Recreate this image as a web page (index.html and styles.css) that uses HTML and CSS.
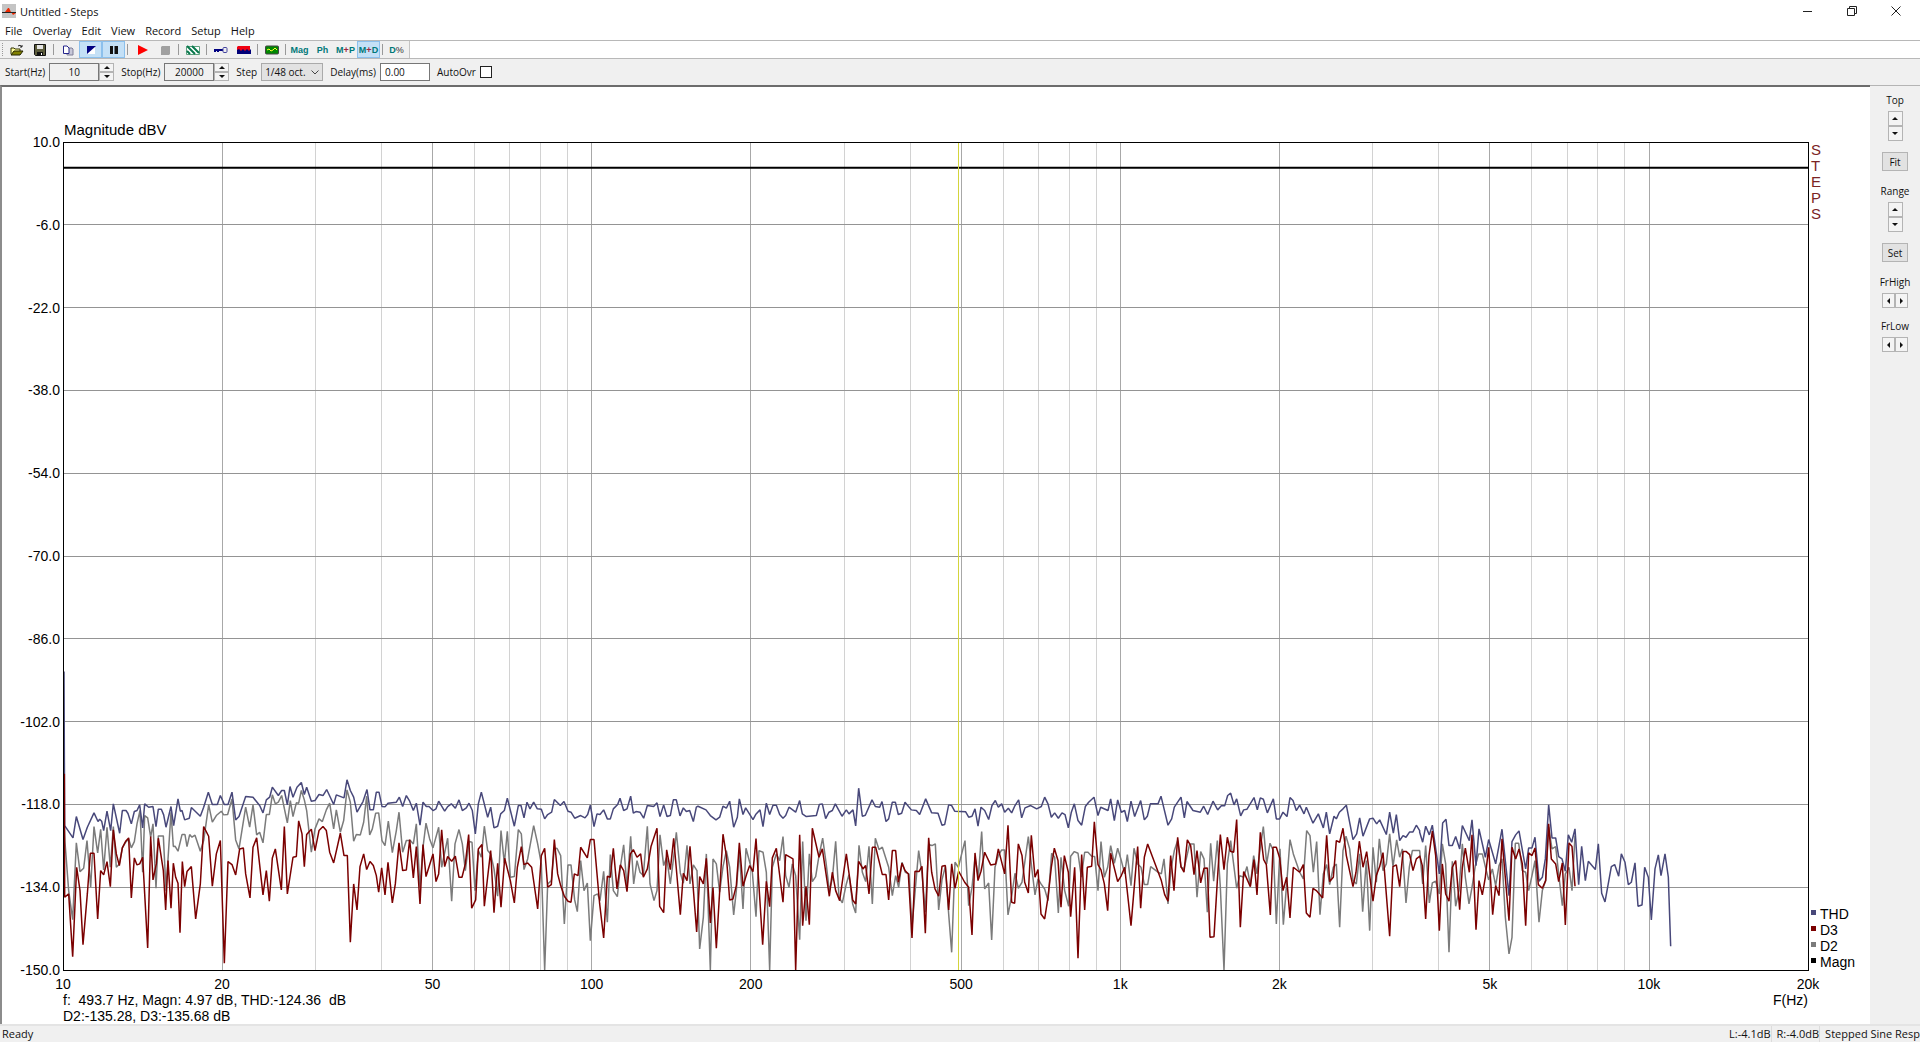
FILE: index.html
```html
<!DOCTYPE html>
<html lang="en">

<head>
    <meta charset="UTF-8">
    <meta name="viewport" content="width=device-width, initial-scale=1.0">
    <title>Untitled - Steps</title>
    <link rel="stylesheet" href="styles.css">
</head>

<body>
    <header class="titlebar">
        <svg class="app-icon" viewBox="0 0 14 14"><rect width="14" height="14" fill="#c4c4c4"/><path d="M0 9L3 8L6 4H7L9 8L11 11L14 9V8H0Z" fill="#f02800"/><path d="M0 8.500H14" stroke="#222"/></svg>
        <h1>Untitled - Steps</h1>
        <div class="window-buttons">
            <button type="button" aria-label="Minimize"><svg viewBox="0 0 10 10"><path d="M0 5.5H9"/></svg></button>
            <button type="button" aria-label="Restore"><svg viewBox="0 0 10 10"><path d="M.5 2.5H7.500V9.500H.5ZM2.500 2V.5H9.500V7.500H8"/></svg></button>
            <button type="button" aria-label="Close"><svg viewBox="0 0 10 10"><path d="M.5 .5L9.500 9.500M9.500 .5L.5 9.500"/></svg></button>
        </div>
    </header>

    <nav class="menu">
        <a href="#">File</a>
        <a href="#">Overlay</a>
        <a href="#">Edit</a>
        <a href="#">View</a>
        <a href="#">Record</a>
        <a href="#">Setup</a>
        <a href="#">Help</a>
    </nav>

    <div class="toolbar">
        <div class="tools">
            <span class="grip"></span>
            <button type="button" aria-label="Open"><svg viewBox="0 0 14 12"><path d="M1 10V4H4L5 5H10V7" fill="#ffff9c" stroke="#333300"/><path d="M1 11L4 7H13L10 11Z" fill="#808000" stroke="#222200"/><path d="M8 2Q10 0 12 3M12 1V3H10" fill="none" stroke="#222"/></svg></button>
            <button type="button" aria-label="Save"><svg viewBox="0 0 14 12"><path d="M2 .5H12.500V11.500H2.500L1.500 10.500V.5Z" fill="#5c5c3c" stroke="#111"/><path d="M4 1H10V5H4Z" fill="#e4e4e4"/><path d="M4 8H10V11H4Z" fill="#111"/><path d="M8 9H9V11H8Z" fill="#fff"/></svg></button>
            <span class="sep"></span>
            <button type="button" aria-label="Copy"><svg viewBox="0 0 14 12"><path d="M6 4H11L12 5V11H6Z" fill="#c8c8d8" stroke="#808098"/><path d="M2.500 2H6L8 4V9.500H2.500Z" fill="#fff" stroke="#26268c"/></svg></button>
            <button type="button" class="on" aria-label="Time record"><svg viewBox="0 0 14 12"><path d="M3 2H11V10H3Z" fill="#fff"/><path d="M3 2H12L3 10Z" fill="#000080"/></svg></button>
            <button type="button" class="on" aria-label="Pause"><svg viewBox="0 0 14 12"><path d="M3 2H6V10H3ZM7.500 2H11V10H7.500Z" fill="#111"/></svg></button>
            <span class="sep"></span>
            <button type="button" aria-label="Record"><svg viewBox="0 0 14 12"><path d="M3 1L13 6L3 11Z" fill="#f00"/></svg></button>
            <button type="button" aria-label="Stop" disabled><svg viewBox="0 0 14 12"><path d="M4 2H12V10L11 11H3V3Z" fill="#a0a0a0"/></svg></button>
            <span class="sep"></span>
            <button type="button" aria-label="Overlay"><svg viewBox="0 0 14 12"><path d="M.5 2.500H13.500V10.500H.5Z" fill="#fff" stroke="#60a080"/><path d="M1 2L9 10M6 2L13 9M1 7L4 10" stroke="#08784c" stroke-width="2"/></svg></button>
            <span class="sep"></span>
            <button type="button" aria-label="Calibrate"><svg viewBox="0 0 14 12"><path d="M0 6H9M1 6V8M4 6V8" stroke="#000080" stroke-width="2"/><rect x="9" y="3.500" width="4" height="5" rx="1" fill="#eee" stroke="#4444a0"/></svg></button>
            <button type="button" aria-label="Spectrum"><svg viewBox="0 0 14 12"><path d="M1 2H13V7H0V3Z" fill="#f00010"/><path d="M0 6L2 5L4 7L6 5L8 7L10 5L12 7L14 5V10H0Z" fill="#000078"/></svg></button>
            <span class="sep"></span>
            <button type="button" aria-label="Generator"><svg viewBox="0 0 14 12"><rect x=".5" y="2" width="13" height="8" rx="1" fill="#008800" stroke="#444"/><path d="M2 6L4 5L6 7L8 6L10 4L12 6" fill="none" stroke="#ffff30"/></svg></button>
            <span class="sep"></span>
            <button type="button">Mag</button>
            <button type="button">Ph</button>
            <button type="button">M<i>+</i>P</button>
            <button type="button" class="on">M<i>+</i>D</button>
            <span class="sep"></span>
            <button type="button">D<b>%</b></button>
        </div>
    </div>

    <form class="params">
        <label for="start">Start(Hz)</label>
        <div class="number">
            <input type="text" id="start" value="10">
            <div class="spin"><button type="button" aria-label="Start up"><i class="up"></i></button><button type="button" aria-label="Start down"><i class="down"></i></button></div>
        </div>
        <label for="stop">Stop(Hz)</label>
        <div class="number">
            <input type="text" id="stop" value="20000">
            <div class="spin"><button type="button" aria-label="Stop up"><i class="up"></i></button><button type="button" aria-label="Stop down"><i class="down"></i></button></div>
        </div>
        <label for="step">Step</label>
        <div class="select">
            <select id="step"><option>1/48 oct.</option></select>
            <svg viewBox="0 0 8 5"><path d="M.5 .5L4 4L7.500 .5"/></svg>
        </div>
        <label for="delay">Delay(ms)</label>
        <input type="text" id="delay" class="delay" value="0.00">
        <label for="auto">AutoOvr</label>
        <input type="checkbox" id="auto">
    </form>

    <main>
        <section class="chart">
            <h2>Magnitude dBV</h2>
            <div class="y-axis">
                <span>10.0</span><span>-6.0</span><span>-22.0</span><span>-38.0</span><span>-54.0</span><span>-70.0</span><span>-86.0</span><span>-102.0</span><span>-118.0</span><span>-134.0</span><span>-150.0</span>
            </div>
            <svg class="plot" id="plot" viewBox="0 0 5235 2482" preserveAspectRatio="none"></svg>
            <div class="plot-side">
                <div class="brand"><span>S</span><span>T</span><span>E</span><span>P</span><span>S</span></div>
                <ul class="legend">
                    <li class="thd">THD</li>
                    <li class="d3">D3</li>
                    <li class="d2">D2</li>
                    <li class="magn">Magn</li>
                </ul>
            </div>
            <div class="bottom">
                <div class="x-axis">
                    <span>10</span><span>20</span><span>50</span><span>100</span><span>200</span><span>500</span><span>1k</span><span>2k</span><span>5k</span><span>10k</span><span>20k</span>
                </div>
                <div class="readout">
                    <p>f:  493.7 Hz, Magn: 4.97 dB, THD:-124.36  dB
D2:-135.28, D3:-135.68 dB</p>
                    <p>F(Hz)</p>
                </div>
            </div>
        </section>

        <aside class="side">
            <div class="group">
                <span>Top</span>
                <div class="spin tall"><button type="button" aria-label="Top up"><i class="up"></i></button><button type="button" aria-label="Top down"><i class="down"></i></button></div>
            </div>
            <button type="button" class="push">Fit</button>
            <div class="group">
                <span>Range</span>
                <div class="spin tall"><button type="button" aria-label="Range up"><i class="up"></i></button><button type="button" aria-label="Range down"><i class="down"></i></button></div>
            </div>
            <button type="button" class="push">Set</button>
            <div class="group">
                <span>FrHigh</span>
                <div class="spin wide"><button type="button" aria-label="High left"><i class="left"></i></button><button type="button" aria-label="High right"><i class="right"></i></button></div>
            </div>
            <div class="group">
                <span>FrLow</span>
                <div class="spin wide"><button type="button" aria-label="Low left"><i class="left"></i></button><button type="button" aria-label="Low right"><i class="right"></i></button></div>
            </div>
        </aside>
    </main>

    <footer class="status">
        <span>Ready</span>
        <span>L:-4.1dB</span>
        <span>R:-4.0dB</span>
        <span>Stepped Sine Resp</span>
    </footer>

    <script src="script.js"></script>
</body>

</html>
```

FILE: styles.css
```css
* {
    box-sizing: border-box;
}

body {
    margin: 0;
    height: 100vh;
    display: flex;
    flex-direction: column;
    overflow: hidden;
    background-color: #fff;
    color: #111;
    font-family: "Open Sans", sans-serif;
    font-size: 11px;
}

button,
input,
select {
    font: inherit;
    color: inherit;
    margin: 0;
    padding: 0;
    border-radius: 0;
}

.titlebar {
    display: flex;
    align-items: center;
    height: 22px;
    padding: 0 2px;
    flex-shrink: 0;
}

.titlebar h1 {
    margin: 0 auto 0 4px;
    font-size: 11px;
    font-weight: normal;
}

.app-icon {
    width: 14px;
    height: 14px;
}

.window-buttons {
    display: flex;
}

.window-buttons button {
    width: 44px;
    height: 20px;
    border: none;
    background: none;
}

.window-buttons svg {
    width: 10px;
    height: 10px;
    fill: none;
    stroke: #222;
}

.menu {
    display: flex;
    gap: 10px;
    height: 18px;
    padding-left: 5px;
    line-height: 18px;
    flex-shrink: 0;
}

.menu a {
    color: inherit;
    text-decoration: none;
}

.toolbar {
    display: flex;
    height: 19px;
    border-top: 1px solid #b8b8b8;
    border-bottom: 1px solid #b8b8b8;
    flex-shrink: 0;
}

.tools {
    display: flex;
    padding-right: 1px;
    background-color: #f0f0f0;
    border-right: 1px solid #c4c4c4;
}

.grip {
    width: 2px;
    margin: 2px 1px 2px 2px;
    border-left: 1px dotted #999;
}

.sep {
    width: 1px;
    margin: 3px 2px;
    background-color: #999;
}

.tools button {
    display: flex;
    align-items: center;
    justify-content: center;
    width: 23px;
    border: none;
    background: none;
    color: #007878;
    font-family: "Liberation Sans", sans-serif;
    font-size: 9px;
    font-weight: bold;
}

.tools button.on {
    background-color: #c4e0f6;
    outline: 1px solid #8cc0ec;
    outline-offset: -1px;
}

.tools i {
    color: #a02840;
    font-style: normal;
}

.tools b {
    color: #333;
    font-weight: normal;
}

.tools svg {
    width: 14px;
    height: 12px;
}

.params {
    display: flex;
    align-items: center;
    height: 26px;
    padding-left: 5px;
    background-color: #f0f0f0;
    font-size: 10px;
    flex-shrink: 0;
}

.params label {
    margin-right: 4px;
}

.number {
    display: flex;
    margin-right: 7px;
}

.number input,
.delay {
    width: 50px;
    height: 18px;
    border: 1px solid #777;
    background-color: #f0f0f0;
    text-align: center;
}

.params .delay {
    padding-left: 4px;
    margin-right: 7px;
    background-color: #fff;
    text-align: left;
}

.select {
    display: grid;
    align-items: center;
    margin-right: 7px;
}

.select select {
    grid-area: 1 / 1;
    width: 62px;
    height: 18px;
    padding-left: 3px;
    border: 1px solid #aaa;
    background-color: #e2e2e2;
    appearance: none;
}

.select svg {
    grid-area: 1 / 1;
    justify-self: end;
    width: 8px;
    height: 5px;
    margin-right: 4px;
    fill: none;
    stroke: #444;
    pointer-events: none;
}

.params input[type="checkbox"] {
    width: 12px;
    height: 12px;
    border: 1px solid #222;
    background-color: #fff;
    appearance: none;
}

.spin {
    display: flex;
    flex-direction: column;
    width: 15px;
    height: 18px;
}

.spin button {
    display: flex;
    flex: 1;
    align-items: center;
    justify-content: center;
    border: 1px solid #b4b4b4;
    background-color: #f4f4f4;
}

.spin.tall {
    height: 30px;
}

.spin.wide {
    flex-direction: row;
    width: 26px;
    height: 15px;
}

.spin i {
    border: 3px solid transparent;
}

.spin .up {
    border-top: none;
    border-bottom-color: #111;
}

.spin .down {
    border-bottom: none;
    border-top-color: #111;
}

.spin .left {
    border-left: none;
    border-right-color: #111;
}

.spin .right {
    border-right: none;
    border-left-color: #111;
}

main {
    display: flex;
    flex: 1;
    min-height: 0;
}

.chart {
    display: grid;
    flex: 1;
    min-width: 0;
    grid-template-columns: 61px 1fr 62px;
    grid-template-rows: 55px 1fr 54px;
    border-top: 2px solid #6c6c6c;
    border-left: 2px solid #8c8c8c;
    background-color: #fff;
    color: #000;
    font-family: "Liberation Sans", Arial, sans-serif;
    font-size: 14px;
    line-height: 16px;
}

.chart h2 {
    grid-column: 2 / 4;
    align-self: end;
    margin: 0 0 4px 1px;
    font-size: 15px;
    font-weight: normal;
}

.y-axis {
    grid-column: 1;
    display: flex;
    flex-direction: column;
    justify-content: space-between;
    padding-right: 3px;
}

.y-axis span {
    display: flex;
    align-items: center;
    justify-content: flex-end;
    height: 0;
}

.plot {
    width: 100%;
    height: 100%;
    min-height: 0;
    overflow: visible;
}

.plot path {
    fill: none;
    stroke-width: 1px;
    vector-effect: non-scaling-stroke;
}

.plot .grid {
    stroke: #d2d2d2;
    shape-rendering: crispEdges;
}

.plot .grid.main {
    stroke: #a8a8a8;
}

.plot .grid.level {
    stroke: #949494;
}

.plot .frame {
    stroke: #000;
    shape-rendering: crispEdges;
}

.plot .cursor {
    stroke: #d4d43c;
    shape-rendering: crispEdges;
}

.plot .trace {
    stroke-width: 1.5px;
    stroke-linejoin: bevel;
}

.plot .magn {
    stroke: #000;
    stroke-width: 2px;
}

.plot .thd {
    stroke: #48487a;
}

.plot .d3 {
    stroke: #7b0000;
}

.plot .d2 {
    stroke: #7b7b7b;
}

.plot-side {
    display: flex;
    flex-direction: column;
    justify-content: space-between;
    padding-left: 3px;
}

.brand {
    display: flex;
    flex-direction: column;
    color: #7b2424;
    font-size: 15px;
}

.legend {
    margin: 0;
    padding: 0;
    list-style: none;
}

.legend li {
    display: flex;
    align-items: center;
    gap: 4px;
}

.legend li::before {
    content: "";
    width: 5px;
    height: 5px;
    margin-bottom: 3px;
}

.legend .thd::before {
    background-color: #48487a;
}

.legend .d3::before {
    background-color: #7b0000;
}

.legend .d2::before {
    background-color: #7b7b7b;
}

.legend .magn::before {
    background-color: #000;
}

.bottom {
    grid-column: 2;
    padding-top: 6px;
}

.x-axis {
    display: grid;
    grid-template-columns: 301fr 398fr 301fr 301fr 398fr 301fr 301fr 398fr 301fr 301fr 0;
}

.x-axis span {
    display: flex;
    justify-content: center;
    width: 0;
}

.readout {
    display: flex;
    justify-content: space-between;
}

.readout p {
    margin: 0;
    white-space: pre;
}

.side {
    display: flex;
    flex-direction: column;
    align-items: center;
    gap: 11px;
    width: 50px;
    padding-top: 7px;
    border-top: 1px solid #b4b4b4;
    background-color: #f0f0f0;
    font-size: 10px;
}

.group {
    display: flex;
    flex-direction: column;
    align-items: center;
    gap: 4px;
    line-height: 14px;
}

.push {
    width: 26px;
    height: 19px;
    margin-bottom: 2px;
    border: 1px solid #b4b4b4;
    background-color: #e2e2e2;
}

.status {
    display: flex;
    height: 18px;
    padding-left: 2px;
    border-top: 2px solid #e4e4e4;
    background-color: #f0f0f0;
    line-height: 16px;
    white-space: nowrap;
    flex-shrink: 0;
}

.status span {
    margin-right: 5px;
    border-right: 1px solid #dcdcdc;
}

.status span:first-child {
    margin-right: auto;
    border: none;
}

.status span:last-child {
    margin-right: 0;
    border: none;
}
```

FILE: script.js
```js
// One sweep per trace, split in four runs: x offset of the run, then its x,y points
const TOP = 1794;
const OFFSETS = [-190, 1220, 2630, 4010];

const traces = {
    d2: [
        "194,258 196,305 207,450 219,537 230,307 241,393 252,383 262,300 273,440 283,258 294,337 303,266 312,388 322,260 332,380 341,258 350,380 359,370 368,322 378,305 387,295 395,322 404,303 412,250 421,210 429,395 435,225 444,232 453,290 460,250 469,443 476,286 491,286 499,450 514,215 521,318 526,317 535,332 547,282 556,282 562,318 570,282 577,290 586,284 602,332 612,300 627,193 638,245 650,225 665,212 672,223 684,222 697,175 708,298 718,325 738,200 750,260 760,193 771,283 780,275 790,307 800,222 809,222 818,163 827,190 836,185 846,165 863,247 872,180 880,228 890,187 897,188 905,150 914,178 921,210 935,335 946,265 958,235 968,243 980,208 990,188 1002,265 1010,208 1022,275 1032,240 1042,148 1052,185 1062,302 1070,282 1082,283 1092,245 1101,167 1110,283 1118,265 1128,218 1137,217 1147,300 1156,315 1166,242 1178,336 1190,270 1198,215 1209,335 1220,300 1232,300 1241,310 1250,250 1261,440 1270,320 1279,248 1290,295 1300,322 1317,260 1326,380 1344,293 1356,482 1366,310 1378,267 1388,310 1397,390 1408,303 1417,305 1426,450 1436,330",
        "35,350 44,257 54,330 63,340 73,385 84,467 94,270 104,368 113,272 122,410 134,408 146,267 155,280 163,387 174,355 192,255 204,310 215,370 225,688 234,430 245,420 254,325 262,323 273,345 284,550 295,373 304,373 315,478 323,513 333,360 343,450 353,427 362,600 373,465 384,460 391,480 402,392 413,545 422,342 431,450 443,468 452,380 462,313 472,440 483,287 492,430 502,360 511,395 521,405 533,257 541,430 553,480 562,450 571,283 582,375 591,350 602,430 612,350 620,275 632,397 641,428 652,314 661,430 671,373 682,390 690,625 701,530 710,340 722,688 730,355 740,370 750,455 760,378 770,330 780,380 792,523 800,450 809,330 820,505 829,323 848,395 859,528 868,330 880,335 890,395 900,688 908,380 920,340 930,360 940,288 948,405 958,440 968,370 978,405 990,597 999,303 1009,540 1019,340 1028,423 1038,408 1048,345 1059,293 1069,365 1079,450 1088,415 1098,302 1108,470 1118,487 1130,430 1138,402 1149,490 1158,517 1168,314 1178,395 1188,423 1198,317 1208,490 1217,293 1228,327 1238,320 1257,380 1268,465 1278,405 1287,440 1297,365 1307,395 1318,400 1327,560 1347,330 1357,400 1367,515 1377,312 1387,315 1397,310 1407,508 1417,417 1427,378 1437,520",
        "36,635 46,365 56,380 76,300 87,495 97,440 106,350 116,410 126,273 135,445 147,427 156,598 166,380 176,345 186,328 195,328 205,523 217,460 226,398 236,443 247,425 266,288 276,380 286,463 295,415 304,430 315,445 325,480 336,338 345,350 356,517 364,350 375,450 387,497 393,347 404,333 415,338 425,410 435,335 445,335 456,347 465,348 475,450 484,303 494,410 504,380 513,315 524,368 534,323 545,360 555,400 563,342 574,435 583,323 594,370 604,380 614,432 624,432 633,378 645,387 655,395 665,400 673,355 685,490 694,385 704,330 714,300 724,380 733,385 742,345 750,310 763,310 772,470 783,333 793,355 803,515 813,308 822,422 833,300 842,440 853,688 863,370 873,300 891,443 900,405 912,410 922,378 932,435 942,345 952,400 962,320 971,258 981,370 991,308 1001,330 1010,550 1021,325 1031,552 1041,430 1051,297 1061,340 1080,395 1091,415 1101,270 1111,285 1121,395 1131,303 1141,522 1151,400 1161,372 1170,432 1181,380 1190,370 1200,560 1210,330 1219,287 1230,325 1240,420 1250,430 1260,340 1269,513 1280,360 1290,570 1300,320 1310,425 1319,295 1330,390 1340,370 1350,280 1360,378 1371,298 1380,350 1388,325 1399,487 1409,380 1418,330 1440,330",
        "60,330 69,430 78,315 89,487 98,427 108,422 119,460 128,310 138,370 148,635 158,362 168,497 178,450 188,310 197,410 208,490 217,440 227,375 237,340 248,340 257,378 267,418 278,385 288,435 298,375 307,355 317,530 328,640 337,590 347,308 357,308 368,390 378,395 387,450 397,405 406,360 418,545 428,450 438,420 447,260 457,325 468,318 477,400 488,495 497,400 508,380 517,450 526,285"
    ],
    thd: [
        "193,-207 195,255 220,292 230,228 250,297 263,260 283,217 295,243 300,236 306,242 312,270 322,212 333,270 341,190 360,278 368,210 379,210 385,219 395,250 404,213 412,210 420,193 429,262 435,190 447,200 460,198 469,258 476,206 485,206 492,223 499,260 514,198 522,255 535,175 542,212 547,210 555,238 569,233 575,201 602,227 612,200 626,155 638,192 653,192 662,165 674,192 685,192 697,155 708,238 718,228 738,168 760,170 780,195 790,217 800,178 810,170 818,140 836,165 846,150 854,150 863,193 871,138 880,170 892,140 905,126 914,162 921,140 935,182 946,180 958,162 970,165 981,147 1002,192 1010,163 1033,172 1042,118 1052,150 1062,170 1072,215 1090,183 1102,147 1111,208 1121,208 1130,155 1138,155 1147,198 1156,199 1165,188 1190,185 1199,170 1209,198 1220,165 1230,182 1241,210 1250,188 1261,254 1270,185 1280,198 1288,198 1300,210 1309,205 1317,182 1335,212 1344,198 1355,190 1367,203 1378,178 1388,210 1400,202 1408,188 1418,210 1427,280 1436,190",
        "35,155 54,230 63,200 73,262 84,257 93,220 104,210 113,173 134,257 146,195 154,195 163,232 172,185 181,205 192,185 203,205 215,206 225,235 234,222 246,215 254,177 272,195 283,183 295,212 304,215 315,233 333,225 346,232 354,222 362,194 373,258 382,220 391,222 402,208 413,235 422,235 431,205 444,192 451,173 462,210 472,205 483,167 491,218 499,213 511,215 522,233 533,195 552,198 562,187 571,228 582,193 592,228 602,225 611,178 620,178 631,226 641,202 650,213 660,210 671,243 680,200 685,197 709,208 722,225 739,238 750,230 760,197 770,203 780,182 792,260 803,230 809,175 820,222 828,202 850,237 858,222 871,208 880,258 890,188 900,222 910,194 920,194 930,222 940,233 948,225 958,200 978,215 990,180 998,220 1010,228 1040,225 1049,192 1058,190 1068,234 1078,215 1088,210 1097,190 1117,227 1130,208 1138,220 1150,208 1158,256 1167,143 1178,227 1187,224 1207,178 1217,198 1230,200 1237,183 1249,243 1257,235 1268,185 1277,185 1286,222 1296,218 1306,185 1325,208 1340,210 1350,222 1368,175 1386,217 1405,218 1417,254 1425,252 1437,193",
        "36,195 45,212 78,214 87,230 97,227 106,205 115,257 124,200 135,210 147,237 157,195 167,180 176,200 186,190 195,215 206,203 216,217 226,195 237,178 246,232 256,202 273,195 291,205 305,198 315,170 325,190 335,230 345,217 356,233 367,217 376,222 386,262 395,215 404,190 415,240 426,254 437,198 447,185 463,170 475,225 483,200 505,210 513,175 524,240 534,178 545,215 555,210 563,243 574,182 585,228 603,180 614,238 623,227 632,190 655,190 664,167 685,254 696,235 704,200 724,170 734,232 742,183 760,210 782,215 792,197 804,222 820,182 834,208 845,196 855,196 864,165 873,158 883,193 891,175 903,226 912,208 922,206 943,171 953,208 962,172 971,176 983,217 1001,175 1010,235 1020,235 1030,215 1042,228 1051,171 1060,180 1070,210 1080,194 1093,220 1100,200 1120,248 1136,220 1151,262 1160,215 1170,280 1183,227 1190,235 1199,215 1210,205 1220,194 1240,297 1251,280 1260,232 1270,287 1290,235 1300,233 1311,250 1320,238 1340,282 1350,215 1361,278 1370,222 1380,300 1390,285 1399,290 1410,274 1420,274 1430,254 1440,270",
        "60,275 69,305 78,257 89,283 98,254 119,400 129,247 139,236 148,315 158,315 168,288 180,325 188,255 209,300 217,238 229,375 238,265 257,350 267,297 288,370 307,266 328,465 337,303 348,283 358,271 378,385 387,322 397,322 406,290 418,422 428,410 437,355 447,193 457,292 468,292 477,348 487,355 497,392 506,283 516,305 526,265 537,432 546,317 557,420 566,362 587,387 596,310 606,458 616,484 635,378 645,372 657,407 665,340 676,365 686,432 695,425 706,367 715,497 727,493 735,380 746,410 755,538 766,385 776,343 784,405 796,340 806,410 813,617"
    ],
    d3: [
        "194,100 195,470 207,460 219,648 231,380 241,450 250,612 263,460 272,338 283,338 294,535 303,390 312,403 322,363 332,438 341,268 350,340 359,375 368,322 378,302 387,292 395,472 404,352 412,373 420,370 429,350 444,622 453,288 460,418 470,370 476,293 491,390 498,508 505,360 514,503 521,368 528,410 535,428 541,576 548,363 555,438 562,393 575,378 588,535 602,430 612,258 627,287 638,437 650,340 662,300 674,668 685,363 697,372 708,403 720,325 731,322 738,400 751,472 760,320 771,292 790,463 800,390 809,482 818,352 827,325 845,448 854,258 863,460 880,350 890,348 897,241 907,280 914,378 921,282 935,266 946,330 958,270 970,258 980,270 990,335 1002,367 1022,278 1033,345 1043,345 1052,605 1062,430 1072,508 1081,378 1092,340 1101,387 1111,363 1121,375 1130,405 1137,455 1146,382 1156,463 1165,365 1178,487 1187,430 1198,307 1209,390 1220,388 1230,297 1241,412 1250,318 1261,490 1270,312 1279,408 1300,340 1309,423 1317,400 1326,268 1335,378 1344,348 1356,362 1367,347 1378,410 1387,410 1397,370 1407,282 1416,503 1428,478 1436,325",
        "37,312 44,497 63,330 73,516 84,368 94,500 105,353 122,420 134,487 143,380 155,318 163,372 174,367 186,380 204,505 215,345 225,323 234,440 245,432 254,297 264,400 273,435 284,467 295,482 304,485 314,400 325,405 333,320 353,352 362,297 373,297 390,490 402,592 413,407 422,410 431,323 442,445 452,373 462,390 472,453 482,340 491,327 502,350 513,340 521,410 533,385 544,318 562,263 570,497 582,516 591,328 602,387 612,293 632,522 641,398 652,420 661,317 681,574 690,408 701,430 710,353 722,547 730,440 740,623 760,281 770,345 780,478 790,475 800,435 809,307 820,437 831,400 840,375 850,393 859,294 879,612 890,422 900,498 908,352 920,323 940,485 948,342 970,355 978,688 990,283 999,555 1009,437 1019,552 1028,263 1048,350 1058,325 1079,467 1088,395 1098,450 1110,480 1130,340 1149,478 1158,490 1167,362 1180,385 1188,375 1198,460 1208,320 1218,320 1238,402 1249,402 1257,478 1268,330 1278,330 1286,425 1297,368 1306,390 1316,400 1327,592 1336,392 1348,393 1357,377 1367,578 1377,292 1386,395 1396,445 1407,467 1417,377 1427,375 1437,508",
        "36,370 46,443 57,392 75,425 87,440 97,583 106,337 115,420 124,392 135,335 153,373 168,370 176,325 195,400 205,254 216,485 225,488 236,310 247,345 255,425 266,457 275,284 286,410 295,387 304,520 315,535 325,470 335,380 344,323 355,360 364,500 374,345 386,395 393,528 405,380 415,653 426,342 435,508 443,380 456,377 464,244 475,372 484,388 494,430 504,510 513,338 534,423 545,405 555,380 574,555 594,318 603,503 614,350 624,310 665,420 675,462 685,482 693,345 703,450 714,290 724,378 733,395 743,298 753,315 763,402 772,330 783,427 793,383 803,382 811,590 823,588 833,420 842,282 853,387 863,290 872,332 882,335 891,237 902,560 912,393 932,438 943,357 952,463 962,275 972,357 980,372 992,523 1000,320 1010,320 1020,352 1030,450 1041,410 1051,532 1061,380 1080,395 1091,372 1100,517 1111,530 1120,443 1130,450 1149,472 1161,284 1170,423 1181,410 1190,300 1200,305 1210,263 1220,345 1240,438 1249,395 1259,302 1270,380 1281,333 1300,482 1310,405 1320,378 1330,336 1350,587 1360,378 1370,373 1380,438 1390,333 1400,333 1410,342 1420,390 1430,355 1440,347",
        "60,345 68,375 78,535 88,345 98,272 108,345 119,570 128,370 138,460 148,482 158,380 168,360 180,507 188,380 197,323 209,395 217,283 229,567 238,420 248,463 257,410 267,320 279,522 288,435 298,465 307,295 328,540 337,320 348,355 358,325 368,370 378,555 387,337 397,345 406,322 416,432 428,443 438,420 447,250 455,355 468,370 477,423 488,367 497,553 508,307 517,318 526,437"
    ]
};

const plot = document.getElementById("plot");
const WIDTH = 5235;
const HEIGHT = 2482;

function addPath(className, d) {
    const path = document.createElementNS("http://www.w3.org/2000/svg", "path");
    path.setAttribute("class", className);
    path.setAttribute("d", d);
    plot.appendChild(path);
}

// frequency lines on a log scale, 10 Hz to 20 kHz
for (let decade = 10; decade <= 10000; decade *= 10) {
    for (let n = 1; n < 10; n++) {
        const f = decade * n;
        if (f > 10 && f < 20000) {
            const x = Math.round(WIDTH * Math.log(f / 10) / Math.log(2000));
            addPath([1, 2, 5].includes(n) ? "grid main" : "grid", `M${x} 0V${HEIGHT}`);
        }
    }
}

for (let i = 0; i < 10; i++) {
    addPath("grid level", `M0 ${Math.round(HEIGHT * i / 10)}H${WIDTH}`);
}

addPath("trace magn", `M0 77H${WIDTH}`);

for (const name in traces) {
    const points = [];
    traces[name].forEach((run, i) => {
        run.split(" ").forEach(point => {
            const [x, y] = point.split(",").map(Number);
            points.push(`${x + OFFSETS[i]} ${y + TOP}`);
        });
    });
    addPath("trace " + name, "M" + points.join("L"));
}

addPath("cursor", `M2685 0V${HEIGHT}`);
addPath("frame", `M0 0V${HEIGHT}H${WIDTH}V0Z`);
```
